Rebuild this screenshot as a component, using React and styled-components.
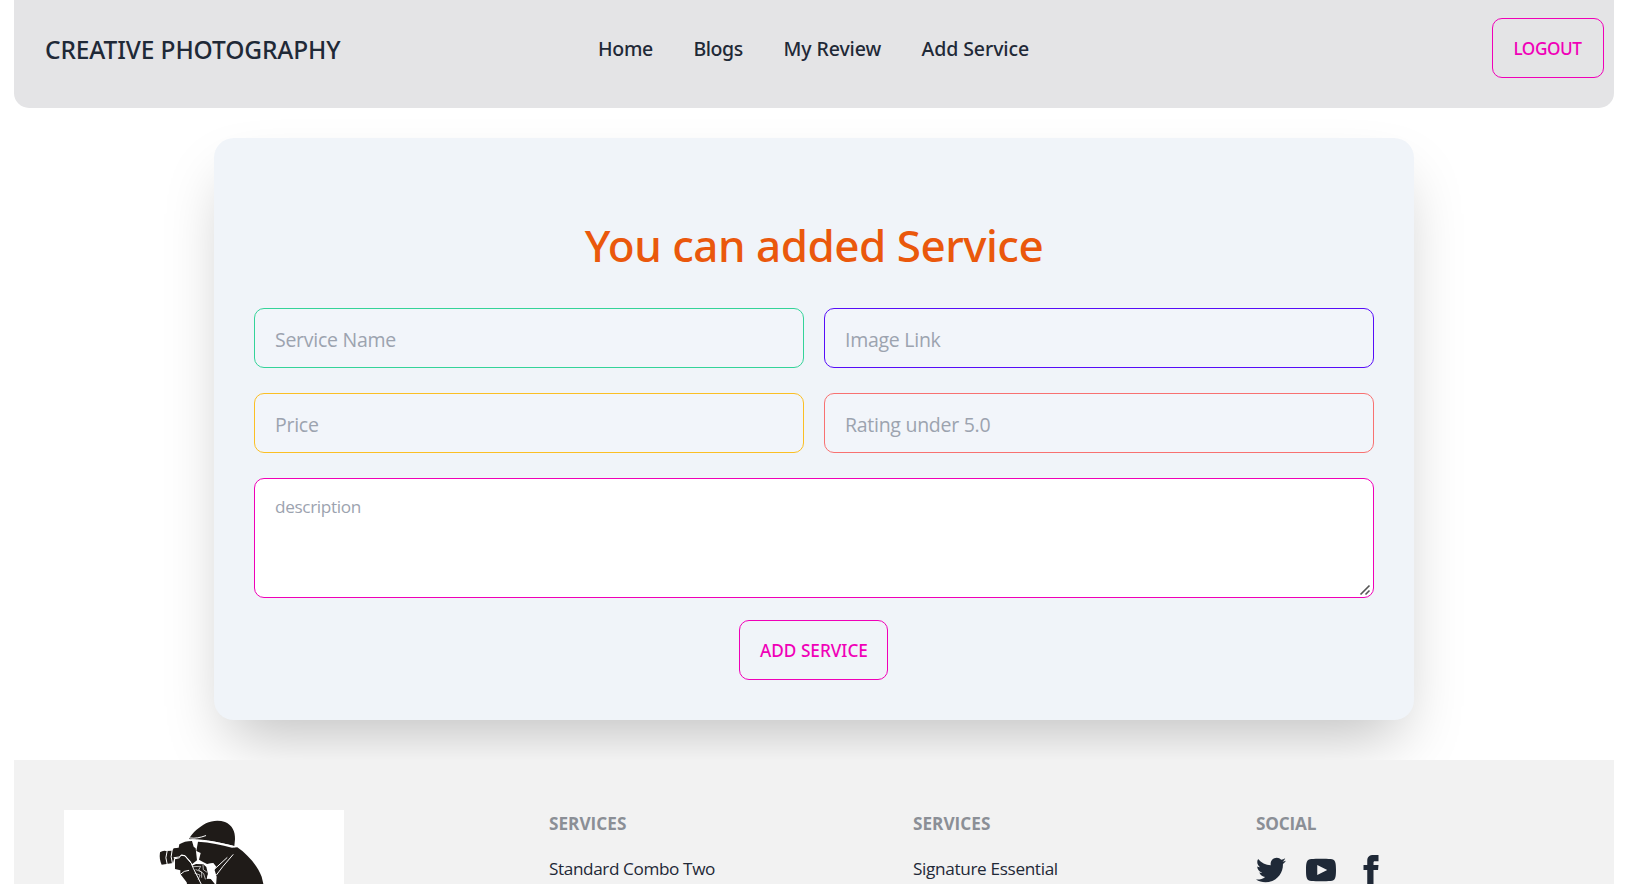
import React from "react";
import styled, { createGlobalStyle } from "styled-components";

const GlobalStyle = createGlobalStyle`
  *, *::before, *::after { box-sizing: border-box; }
  html, body { margin: 0; padding: 0; background: #fff; }
  body {
    height: 884px;
    overflow: hidden;
    color: #1f2937;
    font-family: "Segoe UI", "Open Sans", "Noto Sans", sans-serif;
    font-size: 17.2px;
  }
  h1, h2, ul { margin: 0; padding: 0; }
  a { color: inherit; text-decoration: none; }
`;

const mediumFont = `
  font-family: "Segoe UI", "Noto Sans", "Open Sans", sans-serif;
  font-weight: 500;
`;

const Page = styled.div`
  width: 1600px;
  height: 884px;
  margin: 0 13px 0 14px;
`;

const Navbar = styled.header`
  display: grid;
  grid-template-columns: 553px auto 1fr;
  align-items: start;
  height: 108px;
  padding: 18px 10px 0 31px;
  background: #e4e4e6;
  border-radius: 0 0 15px 15px;
`;

const Brand = styled.a`
  ${mediumFont}
  font-size: 24.5px;
  line-height: 60px;
  letter-spacing: -0.11px;
  padding-top: 2px;
`;

const NavList = styled.ul`
  display: flex;
  list-style: none;
`;

const NavItem = styled.li`
  ${mediumFont}
  width: ${(p) => p.$width}px;
  font-size: 19.5px;
  line-height: 61px;
  letter-spacing: ${(p) => p.$tracking}px;
  white-space: nowrap;
`;

const OutlineButton = styled.button`
  ${mediumFont}
  display: flex;
  align-items: center;
  justify-content: center;
  width: ${(p) => p.$width}px;
  height: 60px;
  padding: 0 1px 0 0;
  color: #f000b8;
  background: transparent;
  border: 1px solid #f000b8;
  border-radius: 10px;
  font-size: 17.2px;
  letter-spacing: ${(p) => p.$tracking || 0}px;
  justify-self: end;
`;

const SubmitButton = styled(OutlineButton)`
  margin-right: 1px;
  padding: 0 0 0 1px;
`;

const Card = styled.main`
  width: 1200px;
  height: 582px;
  margin: 30px auto 40px;
  padding: 79px 40px 40px;
  background: #f0f4f9;
  border-radius: 20px;
  box-shadow: 0 31px 62px -15px rgba(0, 0, 0, 0.25);
`;

const Heading = styled.h1`
  ${mediumFont}
  height: 91px;
  color: #ea580c;
  font-size: 44px;
  line-height: 56px;
  letter-spacing: -0.5px;
  text-align: center;
`;

const Form = styled.form`
  display: flex;
  flex-direction: column;
  align-items: center;
`;

const FieldGrid = styled.div`
  display: grid;
  grid-template-columns: 1fr 1fr;
  gap: 25px 20px;
  width: 100%;
`;

const Field = styled.input`
  width: 100%;
  height: 60px;
  padding: 3px 20px 0;
  font: 400 19.5px "Segoe UI", "Open Sans", sans-serif;
  letter-spacing: -0.27px;
  background: #f2f5fa;
  border: 1px solid ${(p) => p.$tone};
  border-radius: 10px;
  &::placeholder { color: #9ca3af; opacity: 1; }
`;

const DescriptionBox = styled.div`
  position: relative;
  width: 100%;
  height: 120px;
  margin: 25px 0 22px;
`;

const Description = styled.textarea`
  display: block;
  width: 100%;
  height: 120px;
  padding: 13px 20px;
  font: 400 17.2px/29px "Segoe UI", "Open Sans", sans-serif;
  letter-spacing: -0.36px;
  background: #fff;
  border: 1px solid #f000b8;
  border-radius: 10px;
  resize: none;
  &::placeholder { color: #9ca3af; opacity: 1; }
`;

const ResizeGrip = styled.svg`
  position: absolute;
  right: 3px;
  bottom: 2px;
  width: 12px;
  height: 12px;
  fill: none;
  stroke: #555;
  stroke-width: 1.6;
  pointer-events: none;
`;

const Footer = styled.footer`
  display: grid;
  grid-template-columns: 485px 364px 343px auto;
  height: 124px;
  padding: 50px 50px 0;
  background: #f2f2f2;
  position: relative;
  overflow: hidden;
`;

const LogoFrame = styled.div`
  width: 280px;
  height: 280px;
  background: #fff;
`;

const Column = styled.section`
  display: flex;
  flex-direction: column;
`;

const ColumnTitle = styled.h2`
  height: 35px;
  color: #8b8f96;
  font-size: 17.2px;
  font-weight: 700;
  line-height: 27px;
  letter-spacing: ${(p) => p.$tracking || 0}px;
`;

const FooterLink = styled.a`
  line-height: 47px;
  letter-spacing: ${(p) => p.$tracking}px;
`;

const SocialRow = styled.div`
  display: flex;
  gap: 20px;
  padding-top: 10px;
`;

const SocialIcon = styled.svg`
  width: 30px;
  height: 30px;
  fill: #1f2937;
`;

const navItems = [
  { label: "Home", width: 95.5, tracking: -0.3 },
  { label: "Blogs", width: 90, tracking: -0.45 },
  { label: "My Review", width: 138, tracking: -0.1 },
  { label: "Add Service", width: 110, tracking: -0.08 },
];

const fields = [
  { label: "Service Name", tone: "#34d399" },
  { label: "Image Link", tone: "#570df8" },
  { label: "Price", tone: "#fbbf24" },
  { label: "Rating under 5.0", tone: "#f87171" },
];

const socials = [
  "M24 4.557c-.883.392-1.832.656-2.828.775 1.017-.609 1.798-1.574 2.165-2.724-.951.564-2.005.974-3.127 1.195-.897-.957-2.178-1.555-3.594-1.555-3.179 0-5.515 2.966-4.797 6.045-4.091-.205-7.719-2.165-10.148-5.144-1.29 2.213-.669 5.108 1.523 6.574-.806-.026-1.566-.247-2.229-.616-.054 2.281 1.581 4.415 3.949 4.89-.693.188-1.452.232-2.224.084.626 1.956 2.444 3.379 4.6 3.419-2.07 1.623-4.678 2.348-7.29 2.04 2.179 1.397 4.768 2.212 7.548 2.212 9.142 0 14.307-7.721 13.995-14.646.962-.695 1.797-1.562 2.457-2.549z",
  "M19.615 3.184c-3.604-.246-11.631-.245-15.23 0-3.897.266-4.356 2.62-4.385 8.816.029 6.185.484 8.549 4.385 8.816 3.6.245 11.626.246 15.23 0 3.897-.266 4.356-2.62 4.385-8.816-.029-6.185-.484-8.549-4.385-8.816zm-10.615 12.816v-8l8 3.993-8 4.007z",
  "M9 8h-3v4h3v12h5v-12h3.642l.358-4h-4v-1.667c0-.955.192-1.333 1.115-1.333h2.885v-5h-3.808c-3.596 0-5.192 1.583-5.192 4.615v3.385z",
];

function PhotographerLogo() {
  return (
    <LogoFrame>
      <svg width="280" height="280" viewBox="0 0 280 280">
        <g transform="translate(-14 -60) scale(.33333)" fill="#1f1b18">
          <path d="M417 267C428 247 447 232 468 220C486 211 508 210 525 216C547 225 556 245 555 268L553 288C514 278 474 270 441 269Z" />
          <path d="M444 275C480 277 515 284 546 293L562 292C595 315 622 347 635 380L642 410L642 500H480L498 410L500 380L494 361L488 340L471 342Q459 336 447 329L452 309L439 303Z" />
          <path d="M330 307Q338 301 348 303L367 302L371 295L386 293L388 283Q403 273 426 273L431 290L437 295L441 331L426 343L421 333L405 316L394 314L387 323L373 324L369 339L335 344Q327 328 330 307Z" />
          <path d="M375 328L388 325L393 317L404 319L423 340L426 347L438 342L460 343L469 351L474 373L470 387L481 385L497 405L496 500H430L410 397L391 372L391 361L375 357Z" />
          <g fill="none" stroke="#fff" strokeWidth="3" strokeLinecap="round" strokeLinejoin="round">
            <path d="M420 264C437 266 450 263 467 257M425 269C467 269 512 279 553 290M351 304Q344 324 351 341M366 302Q360 320 367 339" />
            <path d="M372 323L388 321L394 315L405 317L424 340L430 355L453 401M391 373Q402 361 416 361M493 358L531 323M500 374L519 349L549 314" />
            <path strokeWidth="2" d="M430 350L452 349L446 360L461 371L466 387M438 359L455 366L455 382M435 370L450 375L445 388M459 345L460 359L470 366" />
          </g>
          <path fill="#fff" d="M473 342L490 339L499 350L489 365L498 379L496 402L485 388L471 385L475 367Z" />
        </g>
      </svg>
    </LogoFrame>
  );
}

export default function App() {
  return (
    <>
      <GlobalStyle />
      <Page>
        <Navbar>
          <Brand href="#">CREATIVE PHOTOGRAPHY</Brand>
          <NavList>
            {navItems.map((item) => (
              <NavItem key={item.label} $width={item.width} $tracking={item.tracking}>
                <a href="#">{item.label}</a>
              </NavItem>
            ))}
          </NavList>
          <OutlineButton $width={112} $tracking={-0.42}>LOGOUT</OutlineButton>
        </Navbar>
        <Card>
          <Heading>You can added Service</Heading>
          <Form>
            <FieldGrid>
              {fields.map((field) => (
                <Field key={field.label} placeholder={field.label} $tone={field.tone} />
              ))}
            </FieldGrid>
            <DescriptionBox>
              <Description placeholder="description" />
              <ResizeGrip viewBox="0 0 12 12">
                <path d="M1.5 10.5L10.5 1.5M6.5 10.5L10.5 6.5" />
              </ResizeGrip>
            </DescriptionBox>
            <SubmitButton type="button" $width={149}>ADD SERVICE</SubmitButton>
          </Form>
        </Card>
        <Footer>
          <PhotographerLogo />
          <Column>
            <ColumnTitle>SERVICES</ColumnTitle>
            <FooterLink href="#" $tracking={-0.4}>Standard Combo Two</FooterLink>
          </Column>
          <Column>
            <ColumnTitle>SERVICES</ColumnTitle>
            <FooterLink href="#" $tracking={-0.35}>Signature Essential</FooterLink>
          </Column>
          <Column>
            <ColumnTitle $tracking={-0.2}>SOCIAL</ColumnTitle>
            <SocialRow>
              {socials.map((d) => (
                <SocialIcon key={d} viewBox="0 0 24 24"><path d={d} /></SocialIcon>
              ))}
            </SocialRow>
          </Column>
        </Footer>
      </Page>
    </>
  );
}
